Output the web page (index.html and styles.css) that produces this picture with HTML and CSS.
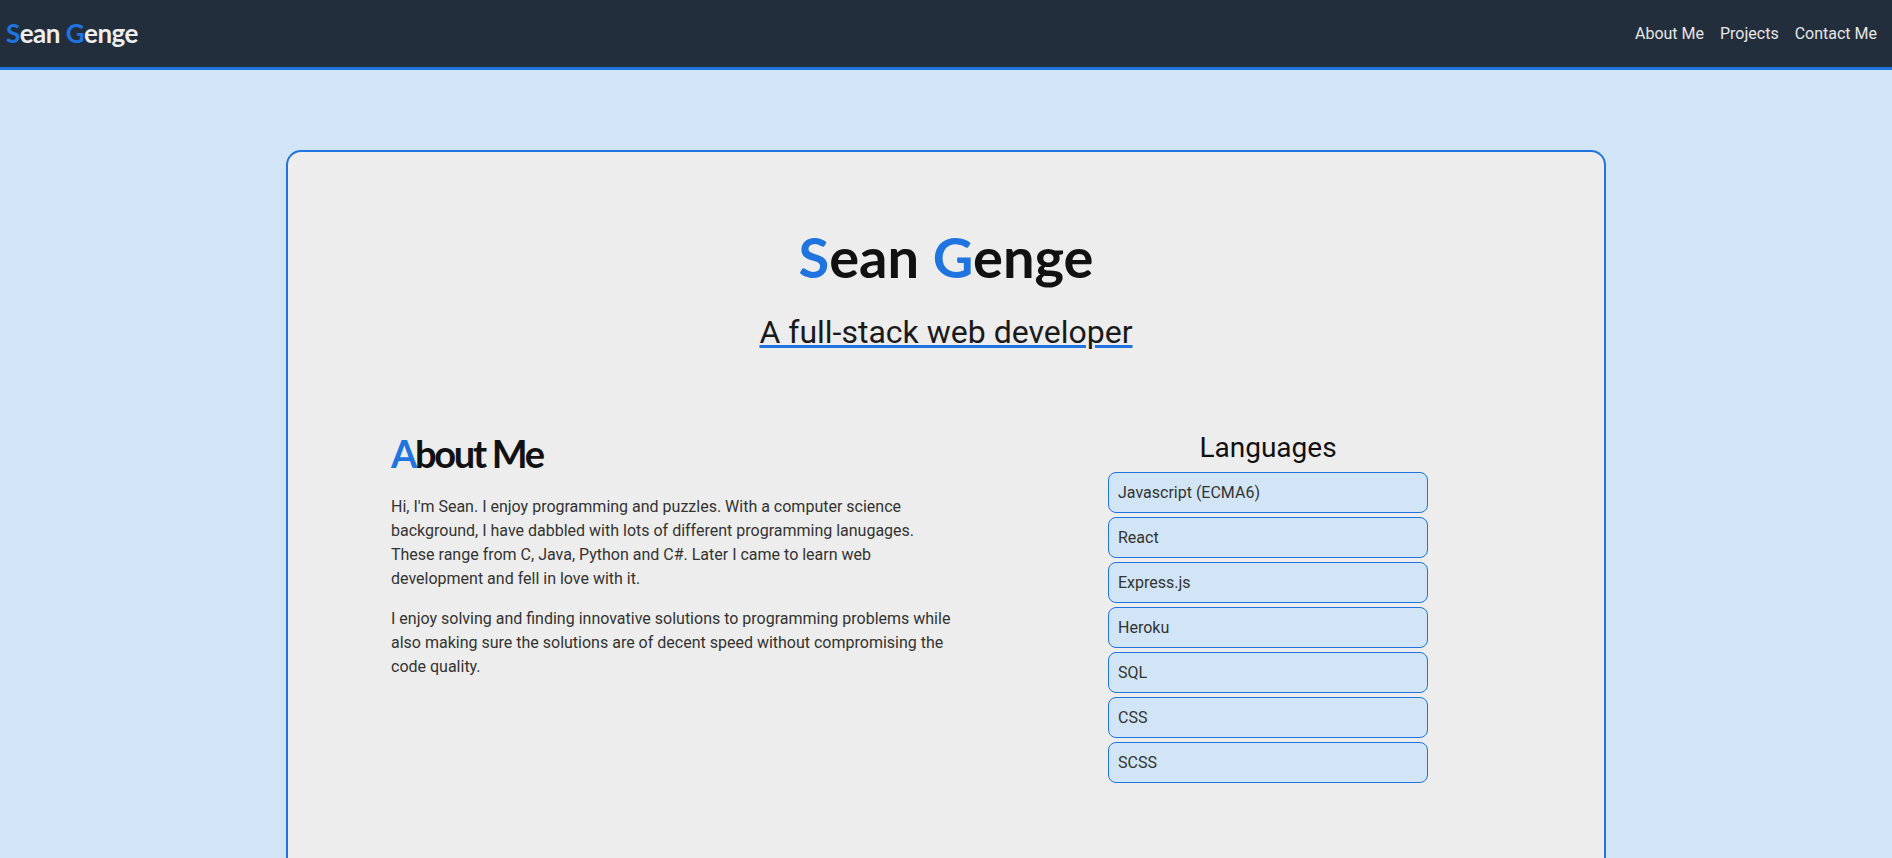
FILE: index.html
```html
<!DOCTYPE html>
<html lang="en">
<head>
<meta charset="utf-8">
<title>Sean Genge</title>
<link rel="stylesheet" href="styles.css">
</head>
<body>
<nav class="navbar">
  <a class="brand" href="#"><span class="accent">S</span>ean <span class="accent">G</span>enge</a>
  <ul class="nav-links">
    <li><a href="#">About Me</a></li>
    <li><a href="#">Projects</a></li>
    <li><a href="#">Contact Me</a></li>
  </ul>
</nav>
<main class="page">
  <section class="card">
    <header class="hero">
      <h1 class="hero-title"><span class="accent">S</span>ean <span class="accent">G</span>enge</h1>
      <p class="hero-sub">A full-stack web developer</p>
    </header>
    <div class="about">
      <div class="about-text">
        <h2 class="section-title"><span class="accent">A</span>bout Me</h2>
        <p>Hi, I'm Sean. I enjoy programming and puzzles. With a computer science background, I have dabbled with lots of different programming lanugages. These range from C, Java, Python and C#. Later I came to learn web development and fell in love with it.</p>
        <p>I enjoy solving and finding innovative solutions to programming problems while also making sure the solutions are of decent speed without compromising the code quality.</p>
      </div>
      <div class="skills">
        <h3 class="skills-title">Languages</h3>
        <ul class="skill-list">
          <li>Javascript (ECMA6)</li>
          <li>React</li>
          <li>Express.js</li>
          <li>Heroku</li>
          <li>SQL</li>
          <li>CSS</li>
          <li>SCSS</li>
        </ul>
      </div>
    </div>
  </section>
</main>
</body>
</html>
```
FILE: styles.css
```css
* { box-sizing: border-box; }
html, body { margin: 0; padding: 0; }
body {
  background: #d1e5f6;
  font-family: Roboto, "Liberation Sans", sans-serif;
  color: #333;
}
.accent { color: #1f74e0; }

.navbar {
  height: 70px;
  background: #222e3c;
  border-bottom: 3px solid #1f74e0;
  display: flex;
  align-items: center;
  justify-content: space-between;
  padding: 0 15px 0 6px;
}
.brand {
  font-family: Lato, "Noto Sans", sans-serif;
  font-weight: 700;
  font-size: 26px;
  color: #eeeeee;
  text-decoration: none;
  letter-spacing: -0.5px;
  margin-top: -2px;
}
.nav-links {
  list-style: none;
  margin: 0;
  padding: 0;
  display: flex;
  gap: 16px;
}
.nav-links a {
  color: #e6e6e6;
  text-decoration: none;
  font-size: 16px;
}

.page { padding-top: 80px; }
.card {
  width: 1320px;
  margin: 0 auto;
  min-height: 820px;
  background: #ededed;
  border: 2px solid #1f74e0;
  border-radius: 15px;
  padding-top: 71px;
}
.hero { text-align: center; }
.hero-title {
  margin: 0;
  font-family: Lato, "Noto Sans", sans-serif;
  font-weight: 700;
  font-size: 56px;
  line-height: 1.2;
  color: #111;
}
.hero-sub {
  margin: 23px 0 0;
  font-size: 32px;
  color: #1a1a1a;
  text-decoration: underline;
  text-decoration-color: #1f74e0;
  text-decoration-thickness: 3px;
  text-underline-offset: 2px;
}
.about {
  display: flex;
  align-items: flex-start;
  padding-left: 103px;
  margin-top: 80px;
}
.about-text { width: 565px; }
.section-title {
  margin: 0 0 18px;
  font-family: Lato, "Noto Sans", sans-serif;
  font-weight: 700;
  font-size: 38px;
  line-height: 1.2;
  letter-spacing: -2.3px;
  color: #111;
}
.about-text p {
  margin: 0 0 16px;
  font-size: 16px;
  line-height: 24px;
  color: #333;
}
.skills {
  width: 320px;
  margin-left: 152px;
}
.skills-title {
  margin: 0 0 8px;
  text-align: center;
  font-weight: 400;
  font-size: 28px;
  line-height: normal;
  color: #111;
}
.skill-list {
  list-style: none;
  margin: 0;
  padding: 0;
  display: flex;
  flex-direction: column;
  gap: 4px;
}
.skill-list li {
  height: 41px;
  display: flex;
  align-items: center;
  padding-left: 9px;
  background: #d1e5f6;
  border: 1px solid #1f74e0;
  border-radius: 8px;
  font-size: 16px;
  color: #333;
}
```
